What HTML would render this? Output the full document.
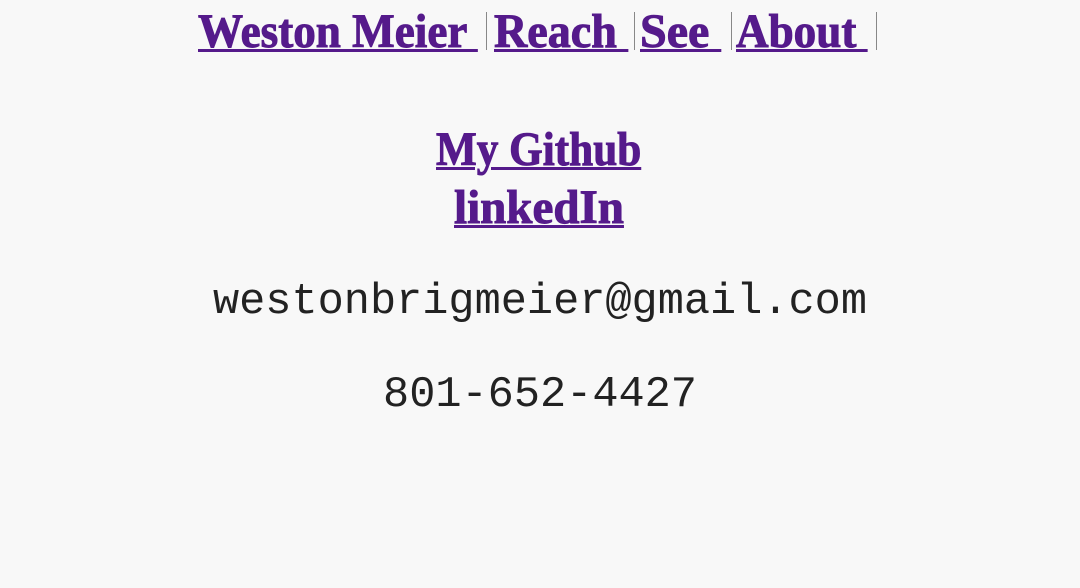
<!DOCTYPE html>
<html><head><meta charset="utf-8"><style>
html,body{margin:0;padding:0;background:#f8f8f8;width:1080px;height:588px;overflow:hidden;position:relative}
.s{position:absolute;font-family:"Liberation Serif",serif;font-weight:bold;font-size:48px;line-height:48px;color:#551a8b;-webkit-text-stroke:1px #551a8b;text-decoration:underline;text-decoration-thickness:3px;white-space:pre;transform-origin:0 0}
.bar{position:absolute;width:1px;background:#888;top:12px;height:38px}
.m{position:absolute;left:0;width:1080px;text-align:center;font-family:"Liberation Mono",monospace;font-size:43.6px;line-height:44px;color:#222}
</style></head><body>
<div class="s" style="left:198px;top:8px;transform:scaleX(.94)">Weston Meier </div>
<div class="bar" style="left:486px"></div>
<div class="s" style="left:494px;top:8px;transform:scaleX(.96)">Reach </div>
<div class="bar" style="left:634px"></div>
<div class="s" style="left:640px;top:8px;transform:scaleX(1)">See </div>
<div class="bar" style="left:731px"></div>
<div class="s" style="left:736px;top:8px;transform:scaleX(.94)">About </div>
<div class="bar" style="left:876px"></div>
<div class="s" style="left:436px;top:126px;transform:scaleX(.9)">My Github</div>
<div class="s" style="left:454px;top:184px;transform:scaleX(.98)">linkedIn</div>
<div class="m" style="top:281px">westonbrigmeier@gmail.com</div>
<div class="m" style="top:374px">801-652-4427</div>
</body></html>
